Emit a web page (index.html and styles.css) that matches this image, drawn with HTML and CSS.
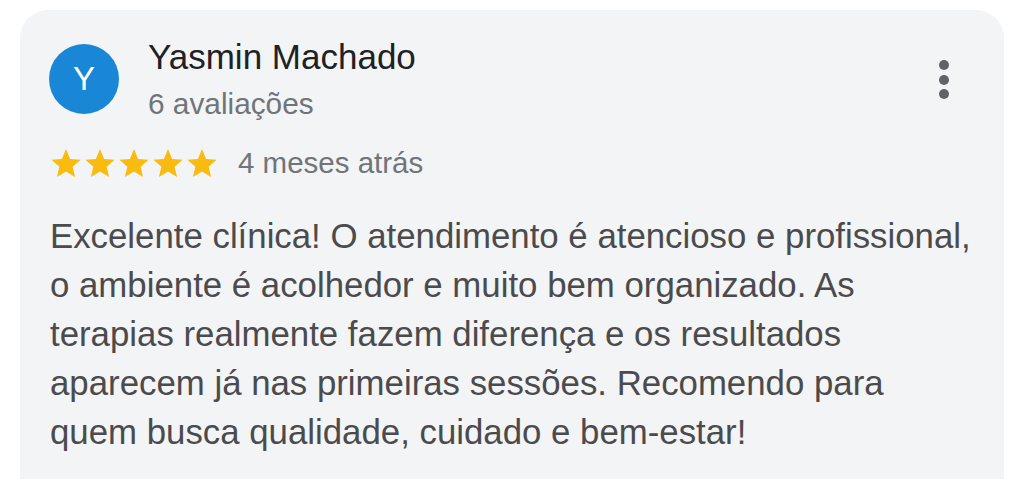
FILE: index.html
```html
<!DOCTYPE html>
<html lang="pt-BR">
<head>
<meta charset="utf-8">
<link rel="stylesheet" href="styles.css">
</head>
<body>
<div class="card">
  <div class="header">
    <div class="avatar">Y</div>
    <div class="who">
      <div class="name">Yasmin Machado</div>
      <div class="count">6 avaliações</div>
    </div>
    <div class="menu" aria-label="Mais opções">
      <span class="dot"></span><span class="dot"></span><span class="dot"></span>
    </div>
  </div>
  <div class="meta">
    <div class="stars">
      <svg viewBox="0 0 24 24" class="star"><path d="M12 2.2l2.9 6.9 7.4.6-5.6 4.9 1.7 7.3L12 18l-6.4 3.9 1.7-7.3-5.6-4.9 7.4-.6z"/></svg>
      <svg viewBox="0 0 24 24" class="star"><path d="M12 2.2l2.9 6.9 7.4.6-5.6 4.9 1.7 7.3L12 18l-6.4 3.9 1.7-7.3-5.6-4.9 7.4-.6z"/></svg>
      <svg viewBox="0 0 24 24" class="star"><path d="M12 2.2l2.9 6.9 7.4.6-5.6 4.9 1.7 7.3L12 18l-6.4 3.9 1.7-7.3-5.6-4.9 7.4-.6z"/></svg>
      <svg viewBox="0 0 24 24" class="star"><path d="M12 2.2l2.9 6.9 7.4.6-5.6 4.9 1.7 7.3L12 18l-6.4 3.9 1.7-7.3-5.6-4.9 7.4-.6z"/></svg>
      <svg viewBox="0 0 24 24" class="star"><path d="M12 2.2l2.9 6.9 7.4.6-5.6 4.9 1.7 7.3L12 18l-6.4 3.9 1.7-7.3-5.6-4.9 7.4-.6z"/></svg>
    </div>
    <span class="when">4 meses atrás</span>
  </div>
  <p class="text">Excelente clínica! O atendimento é atencioso e profissional,<br>o ambiente é acolhedor e muito bem organizado. As<br>terapias realmente fazem diferença e os resultados<br>aparecem já nas primeiras sessões. Recomendo para<br>quem busca qualidade, cuidado e bem-estar!</p>
</div>
</body>
</html>
```

FILE: styles.css
```css
html, body {
  margin: 0;
  padding: 0;
  background: #ffffff;
}

body {
  font-family: "Liberation Sans", Arial, sans-serif;
  width: 1024px;
  height: 491px;
  overflow: hidden;
}

.card {
  margin: 10px 20px 0 20px;
  height: 469px;
  box-sizing: border-box;
  background: #f3f4f6;
  border-radius: 28px 28px 0 0;
  padding: 34px 0 0 29px;
}

.header {
  display: flex;
  align-items: flex-start;
}

.avatar {
  width: 70px;
  height: 70px;
  border-radius: 50%;
  background: #1a87d6;
  color: #ffffff;
  font-size: 33px;
  display: flex;
  align-items: center;
  justify-content: center;
  flex: none;
}

.who {
  margin-left: 29px;
  margin-top: -10px;
  flex: 1;
}

.name {
  font-size: 35px;
  line-height: 46px;
  color: #202124;
}

.count {
  margin-top: 1px;
  font-size: 29.8px;
  line-height: 46px;
  color: #70757a;
}

.menu {
  display: flex;
  flex-direction: column;
  gap: 4.5px;
  margin: 16px 55px 0 0;
}

.dot {
  width: 10px;
  height: 10px;
  border-radius: 50%;
  background: #5f6368;
}

.meta {
  display: flex;
  align-items: center;
  margin-top: 19px;
}

.stars {
  display: flex;
  gap: 0;
}

.star {
  width: 34px;
  height: 34px;
  fill: #f9bb0f;
}

.when {
  margin-left: 19px;
  font-size: 29.5px;
  color: #70757a;
}

.text {
  margin: 31px 0 0 1px;
  font-size: 34.8px;
  line-height: 49px;
  color: #4b4b4d;
}
```
